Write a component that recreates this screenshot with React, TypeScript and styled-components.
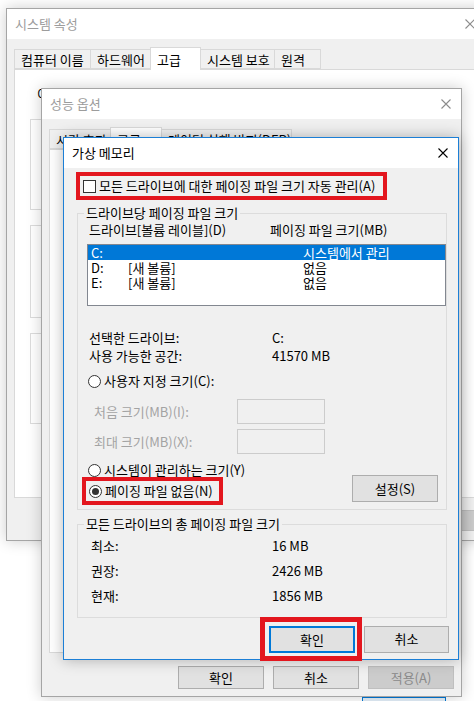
import * as React from 'react';
import styled, { createGlobalStyle } from 'styled-components';

const GlobalStyle = createGlobalStyle`
  html, body {
    margin: 0;
    padding: 0;
    background: #ffffff;
  }
  body {
    font-family: "Noto Sans CJK KR", "Noto Sans", sans-serif;
    font-size: 13px;
    line-height: 16px;
    color: #000000;
  }
  * {
    box-sizing: border-box;
  }
`;

const Desktop = styled.div`
  position: relative;
  width: 474px;
  height: 701px;
  overflow: hidden;
  background: #ffffff;
`;

// 바탕화면 위의 창들은 좌표 자체가 내용이라 absolute 로 배치
const Window = styled.div<{ $left: number; $top: number; $width: number; $height: number; $active?: boolean }>`
  position: absolute;
  z-index: 0;
  left: ${p => p.$left}px;
  top: ${p => p.$top}px;
  width: ${p => p.$width}px;
  height: ${p => p.$height}px;
  display: flex;
  flex-direction: column;
  background: #f0f0f0;
  border: 1px solid ${p => (p.$active ? '#1c7fd6' : '#a5a5a5')};
  box-shadow: 0 0 14px rgba(0, 0, 0, ${p => (p.$active ? 0.28 : 0.2)});
`;

const TitleBar = styled.div<{ $active?: boolean }>`
  flex: none;
  height: 30px;
  display: flex;
  align-items: center;
  justify-content: space-between;
  padding: 0 10px 0 8px;
  background: #ffffff;
  color: ${p => (p.$active ? '#000000' : '#9c9c9c')};
`;

const TabStrip = styled.div`
  flex: none;
  display: flex;
  align-items: flex-end;
  height: 22px;
  margin-top: 8px;
  padding-left: 8px;
  position: relative;
  z-index: 1;
`;

const Tab = styled.div<{ $width: number; $selected?: boolean }>`
  width: ${p => p.$width}px;
  height: ${p => (p.$selected ? 23 : 20)}px;
  margin-bottom: ${p => (p.$selected ? -1 : 0)}px;
  margin-left: -1px;
  padding: 1px 6px 0;
  display: flex;
  align-items: center;
  white-space: nowrap;
  background: ${p => (p.$selected ? '#ffffff' : '#f0f0f0')};
  border: 1px solid #d9d9d9;
  border-bottom: ${p => (p.$selected ? 'none' : '1px solid #d9d9d9')};
`;

const TabPanel = styled.div`
  flex: 1;
  margin: 0 7px;
  padding: 16px 15px 0;
  background: #ffffff;
  border: 1px solid #d9d9d9;
  overflow: hidden;
`;

const FooterRow = styled.div<{ $top: number; $bottom: number }>`
  flex: none;
  display: flex;
  justify-content: flex-end;
  gap: 9px;
  padding: ${p => p.$top}px 7px ${p => p.$bottom}px 0;
`;

const Button = styled.div<{ $width: number; $height: number; $disabled?: boolean; $focused?: boolean }>`
  flex: none;
  width: ${p => p.$width}px;
  height: ${p => p.$height}px;
  display: flex;
  align-items: center;
  justify-content: center;
  background: ${p => (p.$disabled ? '#cccccc' : '#e1e1e1')};
  color: ${p => (p.$disabled ? '#8a8a8a' : '#000000')};
  border: ${p => (p.$focused ? '2px solid #0078d7' : `1px solid ${p.$disabled ? '#bfbfbf' : '#adadad'}`)};
`;

const Note = styled.div`
  padding-left: 7px;
  white-space: nowrap;
`;

// 뒤 창(시스템 속성)의 그룹 상자 — 제목은 앞 창에 가려서 보이지 않음
const Frame = styled.div<{ $top: number; $height: number }>`
  margin-top: ${p => p.$top}px;
  height: ${p => p.$height}px;
  border: 1px solid #dcdcdc;
`;

const GroupBox = styled.fieldset<{ $top: number; $bottom: number }>`
  margin: ${p => p.$top}px 0 0;
  padding: 0 0 ${p => p.$bottom}px;
  min-width: 0;
  border: 1px solid #dcdcdc;
  display: flex;
  flex-direction: column;
`;

const Legend = styled.legend`
  margin-left: 6px;
  padding: 0 2px;
  line-height: 16px;
  white-space: nowrap;
`;

const DialogBody = styled.div`
  flex: none;
  display: flex;
  flex-direction: column;
  padding: 4px 11px 0 13px;
`;

// 빨간 강조 테두리 (스크린샷 표시)
const Highlight = styled.div<{ $thick: number; $pad: string }>`
  flex: none;
  align-self: flex-start;
  display: flex;
  align-items: center;
  border: ${p => p.$thick}px solid #e3161e;
  padding: ${p => p.$pad};
`;

const CheckRow = styled.label`
  display: flex;
  align-items: center;
  gap: 3px;
  height: 20px;
  white-space: nowrap;
`;

const CheckBox = styled.span`
  width: 13px;
  height: 13px;
  background: #ffffff;
  border: 1px solid #333333;
`;

const Radio = styled.span<{ $checked?: boolean }>`
  flex: none;
  width: 13px;
  height: 13px;
  border-radius: 50%;
  background: #ffffff;
  border: 1px solid #333333;
  display: flex;
  align-items: center;
  justify-content: center;

  &::after {
    content: '';
    display: ${p => (p.$checked ? 'block' : 'none')};
    width: 7px;
    height: 7px;
    border-radius: 50%;
    background: #333333;
  }
`;

const RadioRow = styled.div<{ $top: number; $height: number; $indent?: number }>`
  display: flex;
  align-items: center;
  gap: 3px;
  height: ${p => p.$height}px;
  margin-top: ${p => p.$top}px;
  padding-left: ${p => p.$indent ?? 10}px;
  white-space: nowrap;
`;

const HeaderRow = styled.div`
  display: grid;
  grid-template-columns: 181px 1fr;
  margin-top: 1px;
  padding-left: 11px;
  white-space: nowrap;
`;

const ListBox = styled.div`
  width: 359px;
  height: 62px;
  margin: 6px 0 0 9px;
  background: #ffffff;
  border: 1px solid #828790;
`;

const ListRow = styled.div<{ $selected?: boolean }>`
  display: grid;
  grid-template-columns: 37px 175px 1fr;
  height: 15px;
  line-height: 15px;
  padding-left: 3px;
  white-space: nowrap;
  background: ${p => (p.$selected ? '#0078d7' : 'transparent')};
  color: ${p => (p.$selected ? '#ffffff' : '#000000')};
`;

const InfoRow = styled.div<{ $top: number; $indent: number; $col: number }>`
  display: grid;
  grid-template-columns: ${p => p.$col}px 1fr;
  line-height: 18px;
  margin-top: ${p => p.$top}px;
  padding-left: ${p => p.$indent}px;
  white-space: nowrap;
`;

const SizeRow = styled.div<{ $top: number }>`
  display: grid;
  grid-template-columns: 143px 88px;
  align-items: center;
  height: 25px;
  margin-top: ${p => p.$top}px;
  padding-left: 16px;
  color: #a3a3a3;
  white-space: nowrap;
`;

const SizeInput = styled.div`
  height: 25px;
  background: #f0f0f0;
  border: 1px solid #cccccc;
`;

const OptionRow = styled.div`
  display: flex;
  justify-content: space-between;
  align-items: flex-start;
  margin-top: -3px;
  padding: 0 8px 0 4px;
`;

const RedInner = styled.div`
  margin-top: 2px;
`;

const ActionRow = styled.div`
  display: flex;
  justify-content: flex-end;
  align-items: center;
  gap: 2px;
  margin: -1px -2px 0 0;
`;

const PeekButton = styled.div`
  position: absolute;
  left: 362px;
  top: 697px;
  width: 84px;
  height: 12px;
  background: #e5f1fb;
  border: 1px solid #0078d7;
`;

function CloseIcon({ color }: { color: string }) {
  return (
    <svg width="10" height="10" viewBox="0 0 10 10">
      <path d="M0.5 0.5L9.5 9.5M9.5 0.5L0.5 9.5" stroke={color} strokeWidth="1.1" fill="none" />
    </svg>
  );
}

function SystemProperties() {
  return (
    <Window $left={6} $top={8} $width={480} $height={533}>
      <TitleBar>
        <span>시스템 속성</span>
        <CloseIcon color="#8c8c8c" />
      </TitleBar>
      <TabStrip>
        <Tab $width={77}>컴퓨터 이름</Tab>
        <Tab $width={61}>하드웨어</Tab>
        <Tab $width={51} $selected>고급</Tab>
        <Tab $width={75}>시스템 보호</Tab>
        <Tab $width={47}>원격</Tab>
      </TabStrip>
      <TabPanel>
        <Note>이 변경 내용의 대부분을 적용하려면 관리자로 로그온해야 합니다.</Note>
        <Frame $top={17} $height={91} />
        <Frame $top={15} $height={93} />
        <Frame $top={15} $height={91} />
      </TabPanel>
      <FooterRow $top={12} $bottom={9}>
        <Button $width={76} $height={21} $disabled>적용(A)</Button>
      </FooterRow>
    </Window>
  );
}

function PerformanceOptions() {
  return (
    <Window $left={41} $top={88} $width={421} $height={609}>
      <TitleBar>
        <span>성능 옵션</span>
        <CloseIcon color="#8c8c8c" />
      </TitleBar>
      <TabStrip>
        <Tab $width={62}>시각 효과</Tab>
        <Tab $width={52} $selected>고급</Tab>
        <Tab $width={131}>데이터 실행 방지(DEP)</Tab>
      </TabStrip>
      <TabPanel />
      <FooterRow $top={13} $bottom={7}>
        <Button $width={86} $height={23}>확인</Button>
        <Button $width={86} $height={23}>취소</Button>
        <Button $width={86} $height={23} $disabled>적용(A)</Button>
      </FooterRow>
    </Window>
  );
}

const drives = [
  { letter: 'C:', label: '', size: '시스템에서 관리', selected: true },
  { letter: 'D:', label: '[새 볼륨]', size: '없음' },
  { letter: 'E:', label: '[새 볼륨]', size: '없음' },
];

function VirtualMemory() {
  return (
    <Window $left={63} $top={137} $width={396} $height={523} $active>
      <TitleBar $active>
        <span>가상 메모리</span>
        <CloseIcon color="#000000" />
      </TitleBar>
      <DialogBody>
        <Highlight $thick={4} $pad="0 8px 0 3px" style={{ marginLeft: -1 }}>
          <CheckRow>
            <CheckBox />
            <span>모든 드라이브에 대한 페이징 파일 크기 자동 관리(A)</span>
          </CheckRow>
        </Highlight>

        <GroupBox $top={5} $bottom={4}>
          <Legend>드라이브당 페이징 파일 크기</Legend>
          <HeaderRow>
            <span>드라이브[볼륨 레이블](D)</span>
            <span>페이징 파일 크기(MB)</span>
          </HeaderRow>
          <ListBox>
            {drives.map(d => (
              <ListRow key={d.letter} $selected={d.selected}>
                <span>{d.letter}</span>
                <span>{d.label}</span>
                <span>{d.size}</span>
              </ListRow>
            ))}
          </ListBox>
          <InfoRow $top={23} $indent={11} $col={183}>
            <span>선택한 드라이브:</span>
            <span>C:</span>
          </InfoRow>
          <InfoRow $top={0} $indent={11} $col={183}>
            <span>사용 가능한 공간:</span>
            <span>41570 MB</span>
          </InfoRow>
          <RadioRow $top={7} $height={18}>
            <Radio />
            <span>사용자 지정 크기(C):</span>
          </RadioRow>
          <SizeRow $top={9}>
            <span>처음 크기(MB)(I):</span>
            <SizeInput />
          </SizeRow>
          <SizeRow $top={5}>
            <span>최대 크기(MB)(X):</span>
            <SizeInput />
          </SizeRow>
          <RadioRow $top={8} $height={16}>
            <Radio />
            <span>시스템이 관리하는 크기(Y)</span>
          </RadioRow>
          <OptionRow>
            <RedInner>
              <Highlight $thick={4} $pad="0 6px 0 3px">
                <RadioRow $top={0} $height={20} $indent={0}>
                  <Radio $checked />
                  <span>페이징 파일 없음(N)</span>
                </RadioRow>
              </Highlight>
            </RedInner>
            <Button $width={86} $height={27}>설정(S)</Button>
          </OptionRow>
        </GroupBox>

        <GroupBox $top={6} $bottom={12}>
          <Legend>모든 드라이브의 총 페이징 파일 크기</Legend>
          <InfoRow $top={5} $indent={13} $col={181}>
            <span>최소:</span>
            <span>16 MB</span>
          </InfoRow>
          <InfoRow $top={7} $indent={13} $col={181}>
            <span>권장:</span>
            <span>2426 MB</span>
          </InfoRow>
          <InfoRow $top={7} $indent={13} $col={181}>
            <span>현재:</span>
            <span>1856 MB</span>
          </InfoRow>
        </GroupBox>

        <ActionRow>
          <Highlight $thick={5} $pad="4px 2px 3px 4px">
            <Button $width={86} $height={27} $focused>확인</Button>
          </Highlight>
          <Button $width={85} $height={27}>취소</Button>
        </ActionRow>
      </DialogBody>
    </Window>
  );
}

export default function App() {
  return (
    <>
      <GlobalStyle />
      <Desktop>
        <PeekButton />
        <SystemProperties />
        <PerformanceOptions />
        <VirtualMemory />
      </Desktop>
    </>
  );
}
